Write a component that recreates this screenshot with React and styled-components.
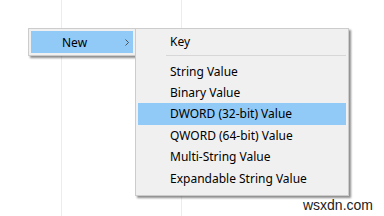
import React from 'react';
import styled, { createGlobalStyle } from 'styled-components';

const GlobalStyle = createGlobalStyle`
    html, body {
        margin: 0;
        padding: 0;
        background: #ffffff;
    }
    body {
        font-family: "Noto Sans", "Liberation Sans", sans-serif;
    }
`;

const Page = styled.div`
    position: relative;
    width: 384px;
    height: 216px;
    overflow: hidden;
    background: #ffffff;
    display: flex;
`;

const Column = styled.div`
    flex: 0 0 ${p => p.$w}px;
    height: 100%;
    border-right: 1px solid #ececec;
    box-sizing: border-box;
`;

const Menu = styled.div`
    position: absolute;
    left: ${p => p.$x}px;
    top: ${p => p.$y}px;
    width: ${p => p.$w}px;
    box-sizing: border-box;
    background: #f0f0f0;
    border: 1px solid #cccccc;
    padding: 2px;
    box-shadow: 2px 2px 2px rgba(0, 0, 0, 0.45);
    display: flex;
    flex-direction: column;
`;

const Item = styled.div`
    height: ${p => p.$h || 21.4}px;
    display: flex;
    align-items: center;
    padding-left: ${p => p.$pad || 32}px;
    padding-right: 3px;
    font-size: 12px;
    color: #000000;
    background: ${p => (p.$active ? '#91c9f7' : 'transparent')};
    white-space: nowrap;
`;

const Label = styled.span`
    flex: 1;
`;

const Separator = styled.div`
    height: 1px;
    background: #d7d7d7;
    margin: 2px 0 5px 28px;
`;

const Chevron = styled.svg`
    width: 6px;
    height: 9px;
    margin-right: 0;
`;

const Watermark = styled.div`
    position: absolute;
    right: 11px;
    bottom: 3px;
    font-family: "Liberation Sans", Arial, sans-serif;
    font-size: 14px;
    color: #222222;
`;

const values = [
    'String Value',
    'Binary Value',
    'DWORD (32-bit) Value',
    'QWORD (64-bit) Value',
    'Multi-String Value',
    'Expandable String Value',
];

const App = () => (
    <>
        <GlobalStyle />
        <Page>
            <Column $w={62} />
            <Column $w={120} />
            <Menu $x={28} $y={28} $w={108}>
                <Item $active $h={22} $pad={31}>
                    <Label>New</Label>
                    <Chevron viewBox="0 0 6 9">
                        <path d="M1.5 1.5 L4.5 4.5 L1.5 7.5" fill="none" stroke="#444" strokeWidth="0.9" />
                    </Chevron>
                </Item>
            </Menu>
            <Menu $x={135} $y={28} $w={214}>
                <Item $h={21.5}>
                    <Label>Key</Label>
                </Item>
                <Separator />
                {values.map(v => (
                    <Item key={v} $active={v.startsWith('DWORD')}>
                        <Label>{v}</Label>
                    </Item>
                ))}
                <Item $h={4} />
            </Menu>
            <Watermark>wsxdn.com</Watermark>
        </Page>
    </>
);

export default App;
